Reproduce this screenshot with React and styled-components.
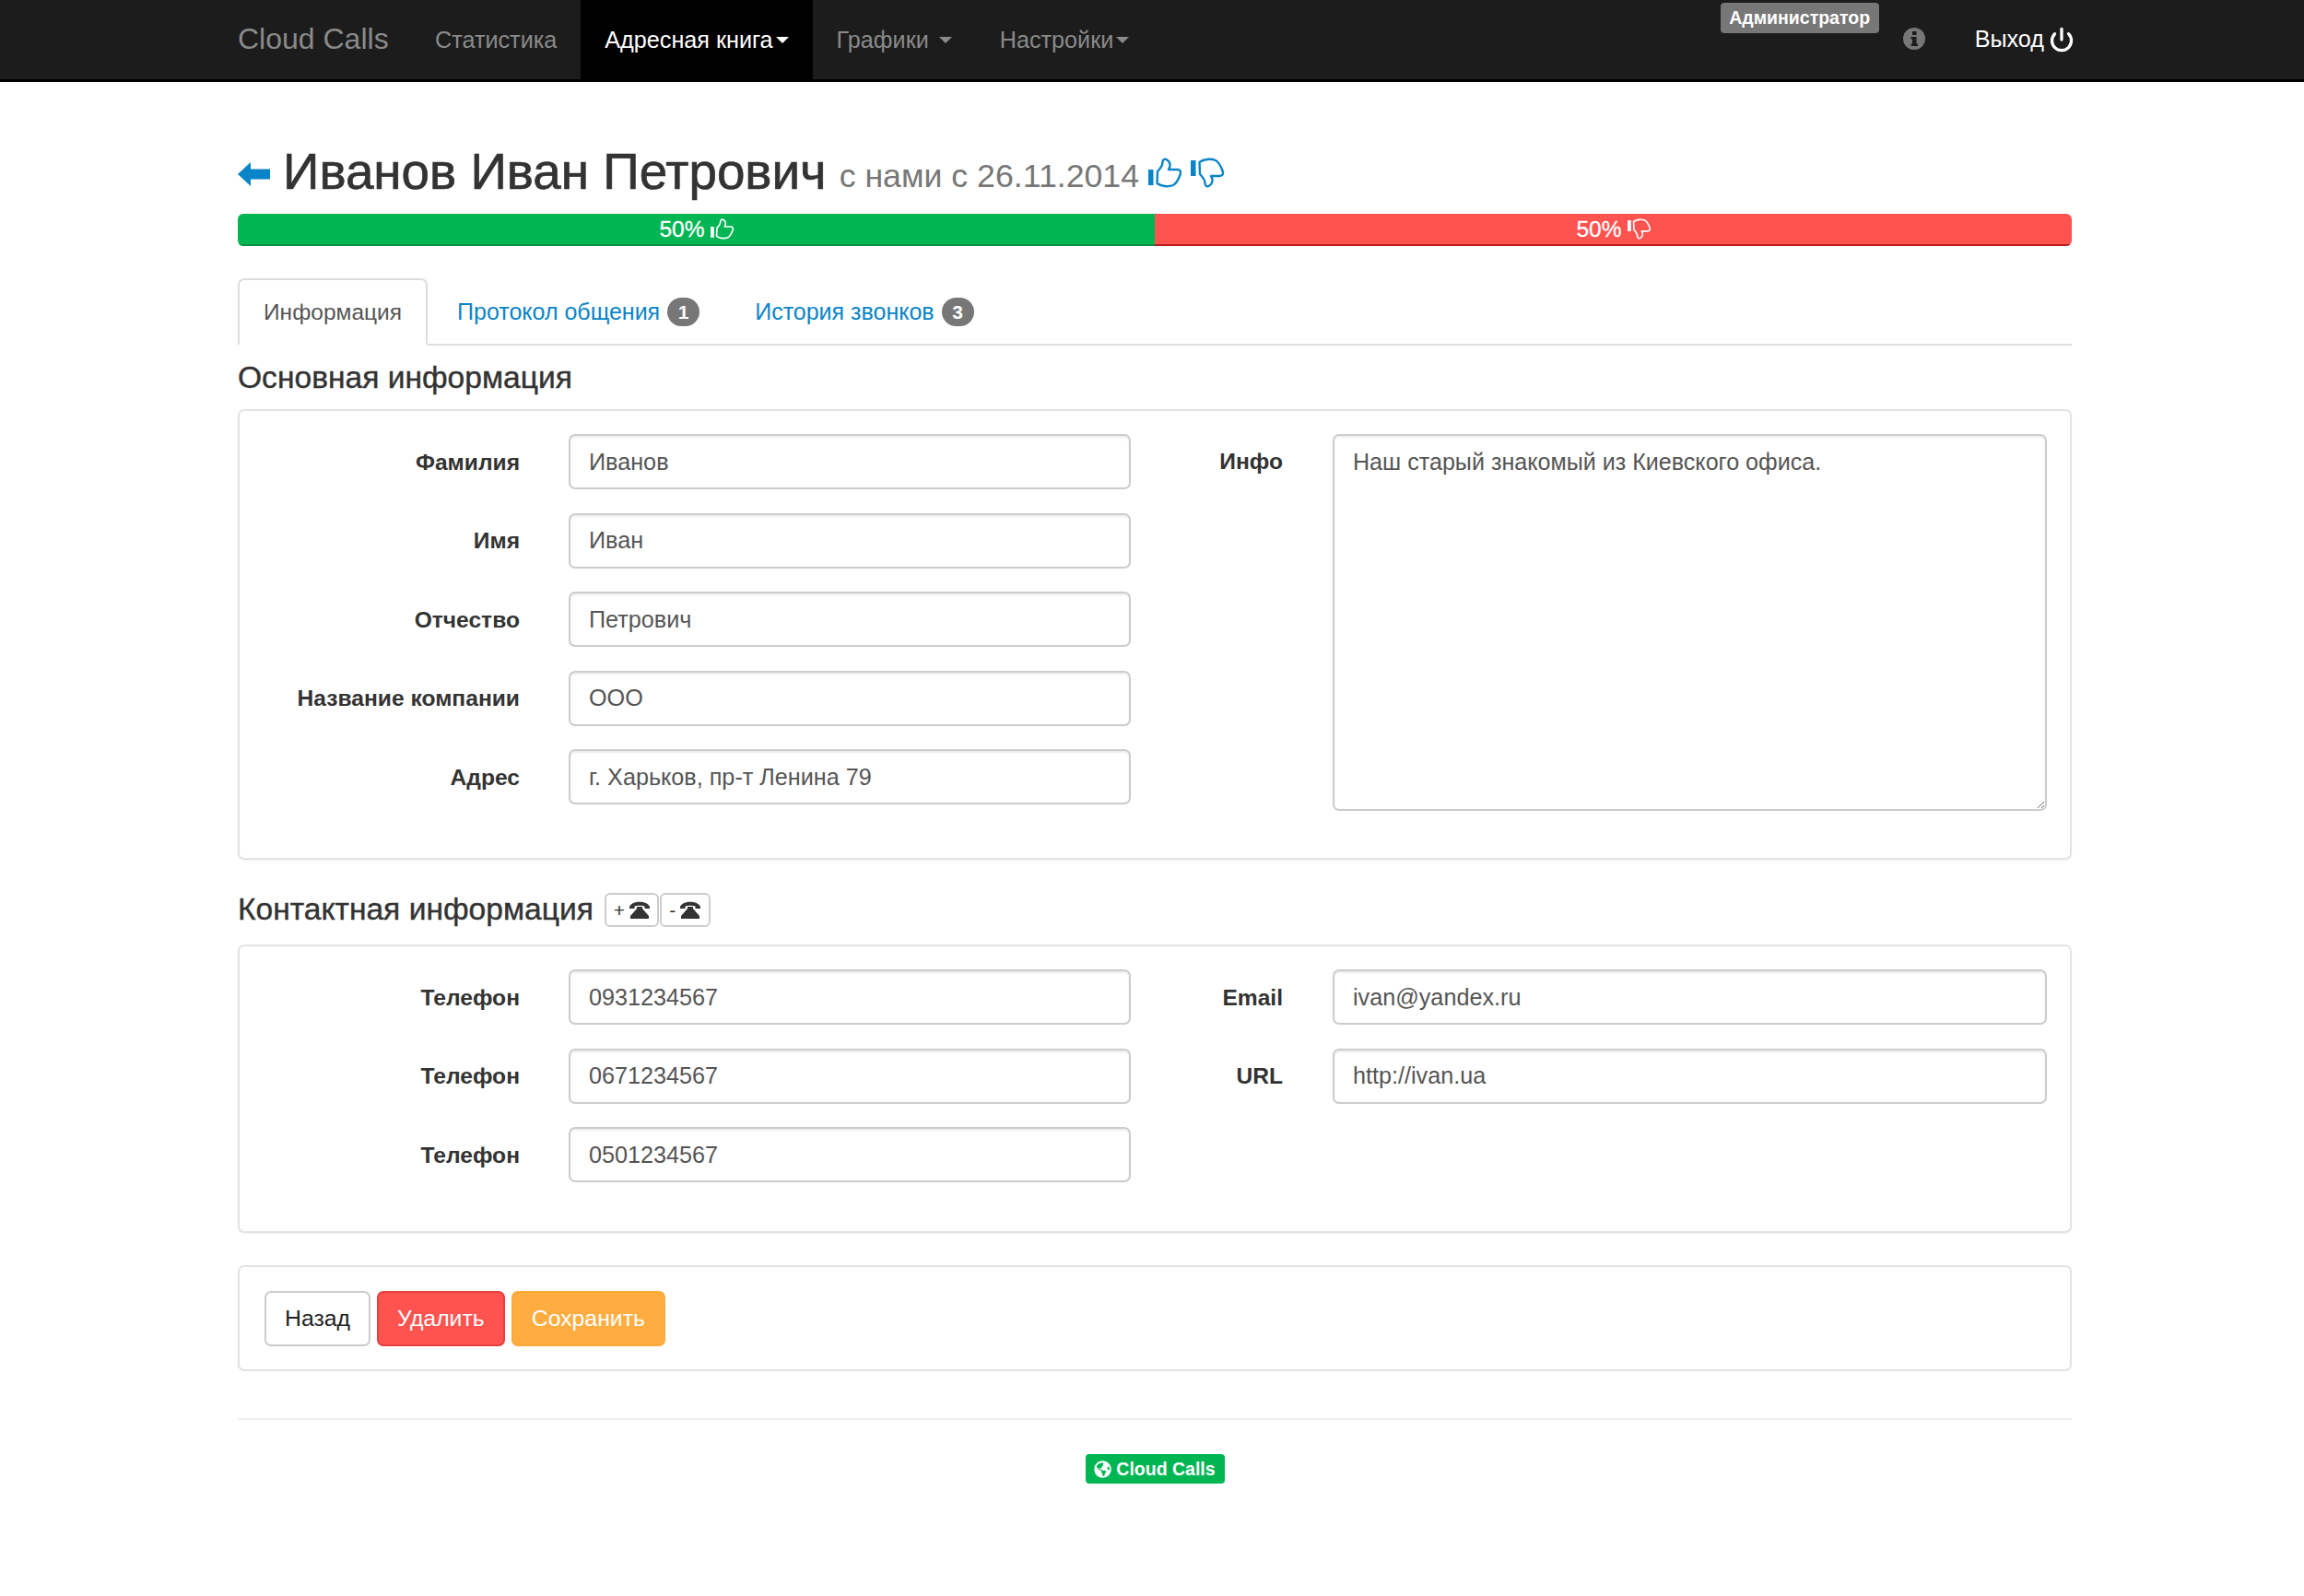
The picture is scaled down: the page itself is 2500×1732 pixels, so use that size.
import React from 'react';
import styled, { createGlobalStyle } from 'styled-components';
import { Power } from 'lucide-react';
import { FaGlobeAmericas } from 'react-icons/fa';

const GlobalStyle = createGlobalStyle`
  html, body {
    margin: 0;
    background: #fff;
    font-family: "Liberation Sans", Arial, sans-serif;
    font-size: 25px;
    color: #333;
  }
  * { box-sizing: border-box; }
`;

const ThumbIcon = ({ down, size = 36, color = '#0a84c8' }) => (
  <Thumb viewBox="0 0 36 33" width={size} height={size * 33 / 36} $down={down}>
    <rect x="0" y="13" width="5.5" height="17" fill={color} />
    <path
      d="M10 15 C13 12 15.5 9 15.5 5 C15.5 2 18 1 20 2.2 C24 4.5 24.5 9 22 13 L31.5 13 C34.5 13 35.8 15.5 34.8 18 C33 23 31 28 27 30 C22 32 14 31.5 9.5 28 Z"
      fill="none"
      stroke={color}
      strokeWidth="2.4"
      strokeLinejoin="round"
    />
  </Thumb>
);

const PhoneIcon = () => (
  <svg viewBox="0 0 22 19" width="22" height="19">
    <path d="M0 6 C3 -1 19 -1 22 6 L22 8 L16.5 8 L16.5 5.5 C14 4.5 8 4.5 5.5 5.5 L5.5 8 L0 8 Z" fill="#333" />
    <path d="M8 6 L14 6 L14 8 L21 16 L21 19 L1 19 L1 16 L8 8 Z" fill="#333" />
  </svg>
);

const InfoIcon = () => (
  <svg viewBox="0 0 24 24" width="24" height="24">
    <circle cx="12" cy="12" r="12" fill="#777" />
    <rect x="10" y="4" width="4.5" height="4" fill="#1c1c1c" />
    <path d="M8.5 10 L14.5 10 L14.5 17.5 L16 17.5 L16 20 L8.5 20 L8.5 17.5 L10 17.5 L10 12.5 L8.5 12.5 Z" fill="#1c1c1c" />
  </svg>
);

const ArrowIcon = () => (
  <ArrowSvg viewBox="0 0 35 26" width="35" height="26">
    <path d="M0 13 L14 0 L14 7.5 L35 7.5 L35 18.5 L14 18.5 L14 26 Z" fill="#0a84c8" />
  </ArrowSvg>
);

const Field = ({ label, value, labelWidth, inputWidth, gap }) => (
  <FieldRow $labelWidth={labelWidth} $inputWidth={inputWidth} $gap={gap}>
    <FieldLabel>{label}</FieldLabel>
    <TextInput readOnly value={value} />
  </FieldRow>
);

const LeftField = (props) => <Field labelWidth={277} inputWidth={610} gap={53} {...props} />;
const RightField = (props) => <Field labelWidth={165} inputWidth={775} gap={54} {...props} />;

const App = () => {
  return (
    <>
      <GlobalStyle />
      <Navbar>
        <NavLeft>
          <Brand>Cloud Calls</Brand>
          <NavItem>Статистика</NavItem>
          <NavItem $active>Адресная книга<Caret $gap={3} /></NavItem>
          <NavItem>Графики<Caret $gap={11} /></NavItem>
          <NavItem>Настройки<Caret $gap={3} /></NavItem>
        </NavLeft>
        <NavRight>
          <RoleLabel>Администратор</RoleLabel>
          <InfoWrap><InfoIcon /></InfoWrap>
          <Logout>Выход <Power size={28} strokeWidth={2.8} color="#fff" /></Logout>
        </NavRight>
      </Navbar>

      <Page>
        <TitleRow>
          <ArrowIcon />
          <Title>Иванов Иван Петрович</Title>
          <Since>с нами с 26.11.2014</Since>
          <ThumbGroup>
            <ThumbIcon />
            <ThumbIcon down />
          </ThumbGroup>
        </TitleRow>

        <Progress>
          <ProgressPart $color="#00b653" $edge="#0a8f45">50% <ThumbIcon size={25} color="#fff" /></ProgressPart>
          <ProgressPart $color="#ff5350" $edge="#b71c1c">50% <ThumbIcon size={25} color="#fff" down /></ProgressPart>
        </Progress>

        <Tabs>
          <Tab $active>Информация</Tab>
          <Tab>Протокол общения<Badge>1</Badge></Tab>
          <Tab>История звонков<Badge>3</Badge></Tab>
        </Tabs>

        <SectionTitle>Основная информация</SectionTitle>
        <Panel $bottom={51}>
          <Columns>
            <FieldColumn>
              <LeftField label="Фамилия" value="Иванов" />
              <LeftField label="Имя" value="Иван" />
              <LeftField label="Отчество" value="Петрович" />
              <LeftField label="Название компании" value="ООО" />
              <LeftField label="Адрес" value="г. Харьков, пр-т Ленина 79" />
            </FieldColumn>
            <InfoRow>
              <FieldLabel>Инфо</FieldLabel>
              <InfoArea readOnly value="Наш старый знакомый из Киевского офиса." />
            </InfoRow>
          </Columns>
        </Panel>

        <ContactHeader>
          <SectionHeading>Контактная информация</SectionHeading>
          <PhoneButtons>
            <PhoneButton $wide>+<PhoneIcon /></PhoneButton>
            <PhoneButton>-<PhoneIcon /></PhoneButton>
          </PhoneButtons>
        </ContactHeader>
        <Panel $bottom={53}>
          <Columns>
            <FieldColumn>
              <LeftField label="Телефон" value="0931234567" />
              <LeftField label="Телефон" value="0671234567" />
              <LeftField label="Телефон" value="0501234567" />
            </FieldColumn>
            <FieldColumn>
              <RightField label="Email" value="ivan@yandex.ru" />
              <RightField label="URL" value="http://ivan.ua" />
            </FieldColumn>
          </Columns>
        </Panel>

        <ActionPanel>
          <ActionButton $bg="#fff" $border="#ccc" $color="#222">Назад</ActionButton>
          <ActionButton $bg="#ff5350" $border="#e5403e" $color="#fff">Удалить</ActionButton>
          <ActionButton $bg="#ffad41" $border="#ffa93a" $color="#fff">Сохранить</ActionButton>
        </ActionPanel>

        <Divider />
        <Footer>
          <FooterBadge><FaGlobeAmericas size={19} /> Cloud Calls</FooterBadge>
        </Footer>
      </Page>
    </>
  );
};

const Navbar = styled.div`
  height: 89px;
  background: #1c1c1c;
  border-bottom: 3px solid #000;
  padding: 0 252px 0 258px;
  display: flex;
  justify-content: space-between;
`;
const NavLeft = styled.div`
  display: flex;
  align-items: stretch;
`;
const Brand = styled.div`
  font-size: 32px;
  color: #8a8a8a;
  width: 188px;
  padding-top: 24px;
`;
const NavItem = styled.div`
  display: flex;
  align-items: center;
  padding: 0 26px;
  height: 86px;
  color: ${(p) => (p.$active ? '#fff' : '#8a8a8a')};
  background: ${(p) => (p.$active ? '#000' : 'transparent')};
  font-size: 25.2px;
`;
const Caret = styled.span`
  display: inline-block;
  margin-left: ${(p) => p.$gap}px;
  border-top: 7px solid currentColor;
  border-left: 7px solid transparent;
  border-right: 7px solid transparent;
`;
const NavRight = styled.div`
  display: flex;
  align-items: flex-start;
  margin-right: -3px;
`;
const RoleLabel = styled.div`
  margin-top: 3px;
  height: 33px;
  width: 172px;
  background: #777;
  color: #fff;
  border-radius: 4px;
  font-size: 19.5px;
  font-weight: bold;
  display: flex;
  align-items: center;
  justify-content: center;
`;
const InfoWrap = styled.div`
  margin: 30px 0 0 26px;
  height: 24px;
`;
const Logout = styled.div`
  margin: 28px 0 0 54px;
  display: flex;
  align-items: center;
  gap: 5px;
  color: #fff;
  font-size: 25.2px;
`;
const Page = styled.div`
  padding: 0 252px 122px 258px;
`;
const TitleRow = styled.div`
  margin-top: 69px;
  height: 58px;
  display: flex;
  align-items: center;
`;
const ArrowSvg = styled.svg`
  margin-top: 3px;
`;
const Title = styled.h1`
  margin: -2px 0 0 14px;
  font-size: 54.8px;
  font-weight: 500;
  -webkit-text-stroke: 0.7px #333;
  color: #333;
  line-height: 58px;
`;
const Since = styled.span`
  margin: 8px 0 0 14px;
  font-size: 35.7px;
  color: #777;
`;
const ThumbGroup = styled.span`
  display: flex;
  gap: 10px;
  margin: 0 0 0 10px;
`;
const Thumb = styled.svg`
  display: block;
  transform: ${(p) => (p.$down ? 'scaleY(-1)' : 'none')};
`;
const Progress = styled.div`
  margin-top: 16px;
  height: 35px;
  display: flex;
  border-radius: 6px;
  overflow: hidden;
`;
const ProgressPart = styled.div`
  flex: 1;
  display: flex;
  align-items: center;
  justify-content: center;
  gap: 6px;
  background: ${(p) => p.$color};
  border-bottom: 2px solid ${(p) => p.$edge};
  color: #fff;
  font-size: 24.5px;
  -webkit-text-stroke: 0.3px #fff;
`;
const Tabs = styled.div`
  margin-top: 35px;
  height: 73px;
  display: flex;
  border-bottom: 2px solid #ddd;
`;
const Tab = styled.div`
  height: 73px;
  padding: 0 ${(p) => (p.$active ? '26px' : '27px')};
  margin-right: ${(p) => (p.$active ? '3px' : '2px')};
  display: flex;
  align-items: center;
  font-size: ${(p) => (p.$active ? '24.5px' : '25px')};
  color: ${(p) => (p.$active ? '#555' : '#0a84c8')};
  background: ${(p) => (p.$active ? '#fff' : 'transparent')};
  border: 2px solid ${(p) => (p.$active ? '#ddd' : 'transparent')};
  border-bottom-color: ${(p) => (p.$active ? '#fff' : 'transparent')};
  border-radius: 7px 7px 0 0;
`;
const Badge = styled.span`
  margin-left: 8px;
  width: 35px;
  height: 31px;
  border-radius: 16px;
  background: #777;
  color: #fff;
  font-size: 21px;
  font-weight: bold;
  display: flex;
  align-items: center;
  justify-content: center;
`;
const SectionHeading = styled.h4`
  margin: 0;
  font-size: 33.6px;
  font-weight: 500;
  line-height: 35px;
  color: #333;
  -webkit-text-stroke: 0.4px #333;
`;
const SectionTitle = styled(SectionHeading)`
  margin: 17px 0 17px;
`;
const ContactHeader = styled.div`
  margin: 35px 0 20px;
  height: 37px;
  display: flex;
  align-items: center;
`;
const PhoneButtons = styled.div`
  display: flex;
  gap: 1px;
  margin: 2px 0 0 12px;
`;
const PhoneButton = styled.div`
  width: ${(p) => (p.$wide ? '59px' : '55px')};
  height: 37px;
  border: 2px solid #ccc;
  border-radius: 6px;
  background: #fff;
  display: flex;
  align-items: center;
  justify-content: center;
  gap: 5px;
  font-size: 21px;
  color: #333;
`;
const Panel = styled.div`
  border: 2px solid #e3e3e3;
  border-radius: 7px;
  padding: 25px 27px ${(p) => p.$bottom}px;
  box-shadow: 0 1px 2px rgba(0, 0, 0, 0.05);
`;
const Columns = styled.div`
  display: flex;
  align-items: flex-start;
`;
const FieldColumn = styled.div`
  display: flex;
  flex-direction: column;
  gap: 25.6px;
`;
const FieldRow = styled.div`
  display: grid;
  grid-template-columns: ${(p) => p.$labelWidth}px ${(p) => p.$inputWidth}px;
  column-gap: ${(p) => p.$gap}px;
  align-items: center;
  height: 60px;
`;
const FieldLabel = styled.label`
  font-size: 24.6px;
  font-weight: bold;
  color: #333;
  text-align: right;
  padding-top: 1px;
`;
const TextInput = styled.input`
  width: 100%;
  height: 60px;
  border: 2px solid #ccc;
  border-radius: 7px;
  padding: 0 20px;
  font-family: inherit;
  font-size: 25.2px;
  color: #555;
  background: #fff;
  box-shadow: inset 0 2px 2px rgba(0, 0, 0, 0.075);
  outline: none;
`;
const InfoRow = styled.div`
  display: grid;
  grid-template-columns: 165px 775px;
  column-gap: 54px;
  align-items: start;
  & > label {
    margin-top: 15px;
  }
`;
const InfoArea = styled.textarea`
  display: block;
  width: 100%;
  height: 409px;
  border: 2px solid #ccc;
  border-radius: 7px;
  padding: 12px 20px;
  font-family: inherit;
  font-size: 25.1px;
  line-height: 1.3;
  color: #555;
  box-shadow: inset 0 2px 2px rgba(0, 0, 0, 0.075);
  outline: none;
`;
const ActionPanel = styled.div`
  margin-top: 35px;
  height: 115px;
  border: 2px solid #e3e3e3;
  border-radius: 7px;
  padding: 26px 27px;
  display: flex;
  gap: 7px;
`;
const ActionButton = styled.button`
  height: 60px;
  padding: 0 20px;
  border: 2px solid ${(p) => p.$border};
  border-radius: 7px;
  background: ${(p) => p.$bg};
  color: ${(p) => p.$color};
  font-family: inherit;
  font-size: 24.8px;
`;
const Divider = styled.hr`
  margin: 51px 0 0;
  border: 0;
  border-top: 2px solid #eee;
`;
const Footer = styled.div`
  margin-top: 37px;
  display: flex;
  justify-content: center;
`;
const FooterBadge = styled.div`
  width: 151px;
  height: 32px;
  border-radius: 4px;
  background: #00b653;
  color: #fff;
  font-size: 19.5px;
  font-weight: bold;
  display: flex;
  align-items: center;
  justify-content: center;
  gap: 5px;
`;

export default App;
